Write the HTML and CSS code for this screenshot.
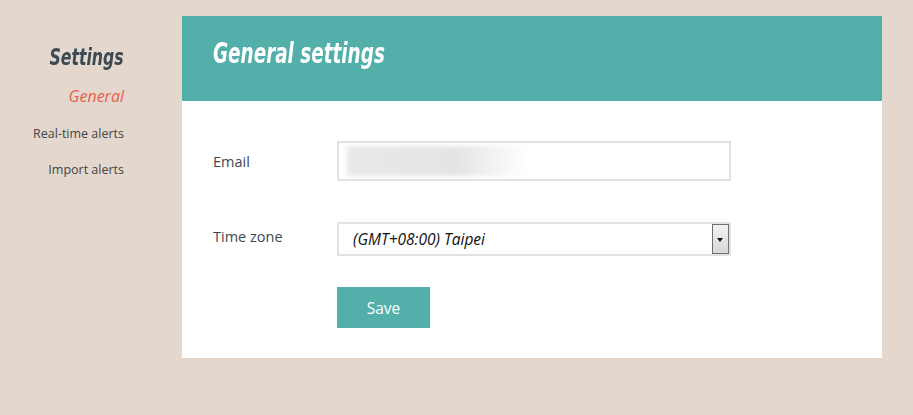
FILE: index.html
```
<!DOCTYPE html>
<html lang="en">
<head>
  <meta charset="UTF-8">
  <title>General settings</title>
  <link rel="stylesheet" href="styles.css">
</head>
<body>
  <div class="page">
    <nav class="sidebar">
      <h2 class="side-title">Settings</h2>
      <a class="side-link active" href="#">General</a>
      <a class="side-link" href="#">Real-time alerts</a>
      <a class="side-link" href="#">Import alerts</a>
    </nav>

    <main class="panel">
      <header class="panel-head">
        <h1>General settings</h1>
      </header>
      <form class="panel-body" onsubmit="return false">
        <div class="row">
          <label for="email">Email</label>
          <div class="field email-field">
            <span class="blur"></span>
            <input type="text" id="email">
          </div>
        </div>
        <div class="row">
          <label for="tz" class="tz-label">Time zone</label>
          <div class="field select-field">
            <select id="tz">
              <option>(GMT+08:00) Taipei</option>
            </select>
            <span class="arrow"></span>
          </div>
        </div>
        <div class="row">
          <span class="spacer"></span>
          <button type="submit" class="save">Save</button>
        </div>
      </form>
    </main>
  </div>
</body>
</html>
```

FILE: styles.css
```
body { margin: 0; background-color: #e4d7ce; font-family: "Open Sans", sans-serif; color: #3c4a52; }
.page { display: flex; padding-top: 16px; }

.sidebar {
  width: 124px;
  display: flex;
  flex-direction: column;
  align-items: flex-end;
  margin-right: 58px;
}
.side-title {
  margin: 28px 0 0;
  font-family: "DejaVu Sans Condensed", sans-serif;
  font-weight: bold;
  font-style: italic;
  font-size: 23px;
  color: #3b4a53;
  transform: scaleX(0.76);
  transform-origin: right center;
}
.side-link { text-decoration: none; color: #454545; font-size: 12.5px; margin-top: 19px; }
.side-link.active {
  color: #e8604c;
  font-style: italic;
  font-size: 16px;
  margin-top: 15px;
  margin-bottom: -1px;
}

.panel { width: 700px; background: #fff; }
.panel-head { background-color: #52afaa; height: 85px; display: flex; align-items: center; padding-left: 31px; }
.panel-head h1 {
  margin: 0 0 10px;
  color: #fff;
  font-family: "DejaVu Sans Condensed", sans-serif;
  font-weight: bold;
  font-style: italic;
  font-size: 28px;
  transform: scaleX(0.73);
  transform-origin: left center;
}

.panel-body { padding: 40px 0 30px 31px; display: flex; flex-direction: column; }
.row { display: flex; align-items: center; }
.row + .row { margin-top: 41px; }
.row:last-child { margin-top: 31px; }
label, .spacer { width: 124px; font-size: 14.5px; color: #3c4a52; }
.tz-label { margin-top: -6px; }

.field { position: relative; width: 394px; }
.email-field input {
  width: 100%;
  box-sizing: border-box;
  height: 40px;
  border: 2px solid #e3e3e3;
  background: transparent;
  position: relative;
}
.blur {
  position: absolute;
  left: 10px; top: 5px;
  width: 180px; height: 30px;
  background: linear-gradient(90deg, #e9e9e9 0%, #e4e4e4 60%, #fff 100%);
  filter: blur(2px);
}
.select-field { height: 34px; }
.select-field select {
  -webkit-appearance: none;
  appearance: none;
  width: 100%;
  height: 34px;
  border: 2px solid #e3e3e3;
  background: #fff;
  padding-left: 14px;
  font-family: "Open Sans", sans-serif;
  font-style: italic;
  font-size: 15.5px;
  color: #111;
  border-radius: 0;
}
.arrow {
  position: absolute;
  right: 2px; top: 2px;
  width: 15px; height: 28px;
  border: 1px solid #707070;
  background: linear-gradient(#f2f2f2, #d8d8d8);
}
.arrow::after {
  content: "";
  position: absolute;
  left: 4px; top: 13px;
  border-left: 3.5px solid transparent;
  border-right: 3.5px solid transparent;
  border-top: 4px solid #111;
}

.save {
  width: 93px;
  height: 41px;
  background-color: #52afaa;
  color: #fff;
  border: none;
  font-family: "Open Sans", sans-serif;
  font-size: 15.5px;
  cursor: pointer;
}
```
